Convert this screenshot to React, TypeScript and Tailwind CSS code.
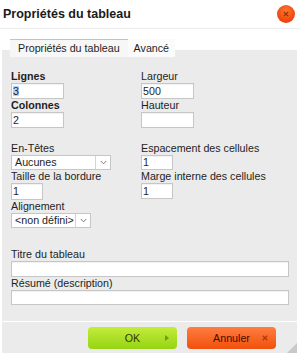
import React from 'react';

const Label: React.FC<{ children: React.ReactNode; bold?: boolean }> = ({ children, bold }) => (
  <div className={`h-[13px] leading-[13px] whitespace-nowrap ${bold ? 'font-bold' : ''}`}>{children}</div>
);

const Field: React.FC<{ w: string; h?: string; children?: React.ReactNode }> = ({ w, h = 'h-[16px]', children }) => (
  <div
    className={`${w} ${h} flex items-center border border-[#c6c6c6] bg-white pl-[1px] leading-none shadow-[inset_0_1px_1px_rgba(0,0,0,0.06)]`}
  >
    {children}
  </div>
);

const Select: React.FC<{ w: string; value: string }> = ({ w, value }) => (
  <div className={`${w} flex h-[15px] items-stretch border border-[#c6c6c6] bg-white`}>
    <div className="flex flex-1 items-center pl-[3px] leading-none whitespace-nowrap">{value}</div>
    <div className="flex w-[15px] items-center justify-center border-l border-[#d4d4d4]">
      <svg width="7" height="5" viewBox="0 0 7 5">
        <path d="M0.8 1 L3.5 3.8 L6.2 1" fill="none" stroke="#7a7a7a" strokeWidth="1" />
      </svg>
    </div>
  </div>
);

export default function App() {
  return (
    <div className="relative h-[357px] w-[300px] bg-white font-['Liberation_Sans',Arial,sans-serif] text-[10.7px] text-[#1e1e1e]">
      {/* title bar */}
      <div className="flex h-[29px] items-center justify-between border-b border-[#ececec] pr-[5px] pl-[3px]">
        <span className="text-[12.5px] font-bold text-[#1a1a1a]">Propriétés du tableau</span>
        <div className="flex h-[18px] w-[18px] items-center justify-center rounded-full bg-[radial-gradient(circle_at_50%_35%,#ff7a30,#f04a12_60%,#dd3a0a)]">
          <svg width="6" height="6" viewBox="0 0 6 6">
            <path d="M0.8 0.8 L5.2 5.2 M5.2 0.8 L0.8 5.2" stroke="#9b2a05" strokeWidth="1.2" />
          </svg>
        </div>
      </div>

      {/* tabs */}
      <div className="relative z-10 mt-[10px] -mb-[7px] flex pl-[10px]">
        <div className="flex h-[18px] items-center border-t border-[#c3c3c3] bg-[#f7f7f7] px-[8px]">
          Propriétés du tableau
        </div>
        <div className="flex h-[18px] items-center bg-[#fbfbfb] px-[6px]">Avancé</div>
      </div>

      {/* panel */}
      <div className="relative mx-[2px] flex h-[303px] w-[295px] flex-col bg-[#ebebeb]">
        <div className="flex-1 pt-[20px] pl-[9px]">
          <div className="grid grid-cols-[130px_1fr]">
            <div>
              <Label bold>Lignes</Label>
              <Field w="w-[53px]">
                <span className="bg-[#b3d4fc]">3</span>
              </Field>
              <Label bold>Colonnes</Label>
              <Field w="w-[53px]">2</Field>
            </div>
            <div>
              <Label>Largeur</Label>
              <Field w="w-[53px]">500</Field>
              <Label>Hauteur</Label>
              <Field w="w-[53px]" />
            </div>
          </div>

          <div className="mt-[14px] grid grid-cols-[130px_1fr]">
            <div>
              <Label>En-Têtes</Label>
              <Select w="w-[100px]" value="Aucunes" />
              <Label>Taille de la bordure</Label>
              <Field w="w-[32px]" h="h-[17px]">1</Field>
              <Label>Alignement</Label>
              <Select w="w-[80px]" value="<non défini>" />
            </div>
            <div>
              <Label>Espacement des cellules</Label>
              <Field w="w-[32px]" h="h-[15px]">1</Field>
              <Label>Marge interne des cellules</Label>
              <Field w="w-[32px]" h="h-[16px]">1</Field>
            </div>
          </div>

          <div className="mt-[20px]">
            <Label>Titre du tableau</Label>
            <Field w="w-[278px]" />
            <Label>Résumé (description)</Label>
            <Field w="w-[278px]" h="h-[15px]" />
          </div>
        </div>

        {/* footer */}
        <div className="flex h-[32px] justify-end gap-[10px] border-t border-white pt-[5px] pr-[21px]">
          <div className="relative flex h-[22px] w-[89px] items-center justify-center rounded-[4px] bg-[linear-gradient(#c2ec3c,#96d412)] text-[#2b3a00]">
            OK
            <svg className="absolute right-[8px]" width="4" height="6" viewBox="0 0 4 6">
              <path d="M0 0 L4 3 L0 6 Z" fill="#6f9a12" />
            </svg>
          </div>
          <div className="relative flex h-[22px] w-[89px] items-center justify-center rounded-[4px] bg-[linear-gradient(#ff7d40,#f1500c)] text-[#3a1200]">
            Annuler
            <svg className="absolute right-[8px]" width="6" height="6" viewBox="0 0 6 6">
              <path d="M0.8 0.8 L5.2 5.2 M5.2 0.8 L0.8 5.2" stroke="#b33a08" strokeWidth="1.3" />
            </svg>
          </div>
        </div>

        {/* resize grip */}
        <svg className="absolute right-0 bottom-0" width="10" height="10" viewBox="0 0 10 10">
          <path d="M10 0 L10 10 L0 10 Z" fill="#c9c9c9" />
        </svg>
      </div>
    </div>
  );
}
